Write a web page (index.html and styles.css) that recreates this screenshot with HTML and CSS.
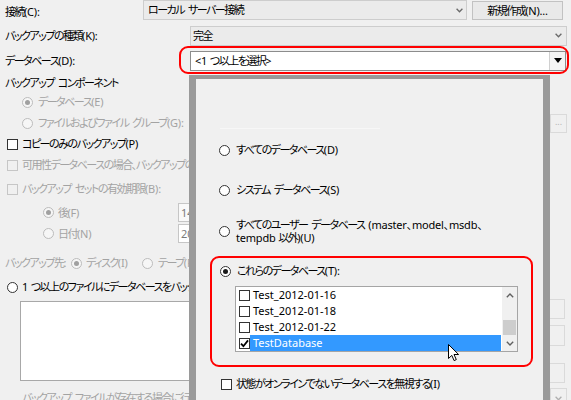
FILE: index.html
```html
<!DOCTYPE html>
<html lang="ja">
<head>
<meta charset="utf-8">
<link rel="stylesheet" href="styles.css">
</head>
<body>
<div class="page">
  <div class="form">
    <div class="row r1">
      <span class="lbl-c">接続<span class="en">(C):</span></span>
      <div class="combo c1"><span class="ctext">ローカル サーバー接続</span><svg class="chev" width="7" height="5" viewBox="0 0 7 5"><polyline points="0.6,0.8 3.5,3.8 6.4,0.8" fill="none" stroke="#6a6a6a" stroke-width="1.3"/></svg></div>
      <button class="btn">新規作成<span class="en">(N)...</span></button>
    </div>
    <div class="row r2">
      <span class="lbl-k">バックアップの種類<span class="en">(K):</span></span>
      <div class="combo c2"><span class="ctext">完全</span><svg class="chev" width="7" height="5" viewBox="0 0 7 5"><polyline points="0.6,0.8 3.5,3.8 6.4,0.8" fill="none" stroke="#6a6a6a" stroke-width="1.3"/></svg></div>
    </div>
    <div class="row r3">
      <span class="lbl-k">データベース<span class="en">(D):</span></span>
      <div class="combo c3"><span class="ctext"><span class="en">&lt;1 </span>つ以上を選択<span class="en">&gt;</span></span><span class="dropbtn"><svg width="8" height="5" viewBox="0 0 8 5"><polygon points="0,0 8,0 4,5" fill="#000"/></svg></span></div>
    </div>
    <div class="row grp">バックアップ コンポーネント</div>
    <div class="row opt-e dis"><span class="radio on"></span><span>データベース<span class="en">(E)</span></span></div>
    <div class="row opt-g dis"><span class="radio"></span><span>ファイルおよびファイル グループ<span class="en">(G):</span></span><span class="dots">...</span></div>
    <div class="row chk-p"><span class="check"></span><span>コピーのみのバックアップ<span class="en">(P)</span></span></div>
    <div class="row chk-a dis"><span class="check"></span><span>可用性データベースの場合、バックアップの優先設定を無視する</span></div>
    <div class="row chk-b dis"><span class="check"></span><span>バックアップ セットの有効期限<span class="en">(B):</span></span></div>
    <div class="row opt-f dis"><span class="radio on"></span><span class="sub-text">後<span class="en">(F)</span></span><span class="field f1">14</span></div>
    <div class="row opt-n dis"><span class="radio"></span><span class="sub-text">日付<span class="en">(N)</span></span><span class="field f2">20</span></div>
    <div class="row dest dis"><span class="dest-lbl">バックアップ先:</span><span class="radio on"></span><span class="dest-opt">ディスク<span class="en">(I)</span></span><span class="radio"></span><span class="dest-opt2">テープ<span class="en">(P)</span></span></div>
    <div class="row opt-files"><span class="radio"></span><span><span class="en">1 </span>つ以上のファイルにデータベースをバックアップする<span class="en">(B):</span></span></div>
    <div class="row box-row">
      <div class="filebox"></div>
      <div class="side-btns"><span class="sbtn b1"></span><span class="sbtn b2"></span><span class="sbtn b3"></span></div>
    </div>
    <div class="row last dis"><span class="last-text">バックアップ ファイルが存在する場合に行う処理</span><span class="mini-combo"><svg width="7" height="5" viewBox="0 0 7 5"><polyline points="0.6,0.8 3.5,3.8 6.4,0.8" fill="none" stroke="#b0b0b0" stroke-width="1.3"/></svg></span></div>
  </div>

  <div class="hl hl-db"></div>

  <div class="panel">
    <div class="ghost"></div>
    <div class="popt p1"><span class="radio"></span><span>すべてのデータベース<span class="en">(D)</span></span></div>
    <div class="popt p2"><span class="radio"></span><span>システム データベース<span class="en">(S)</span></span></div>
    <div class="popt p3"><span class="radio"></span><span class="two">すべてのユーザー データベース <span class="en">(master、model、msdb、</span><br><span class="en">tempdb </span>以外<span class="en">)(U)</span></span></div>
    <div class="pick">
      <div class="popt p4"><span class="radio on"></span><span>これらのデータベース<span class="en">(T):</span></span></div>
      <div class="list">
        <div class="items">
          <div class="item"><span class="check"></span><span class="itext">Test_2012-01-16</span></div>
          <div class="item"><span class="check"></span><span class="itext">Test_2012-01-18</span></div>
          <div class="item"><span class="check"></span><span class="itext">Test_2012-01-22</span></div>
          <div class="item sel"><span class="check"><svg width="9" height="9" viewBox="0 0 9 9"><polyline points="1,4.6 3.4,7.2 8,1.4" fill="none" stroke="#000" stroke-width="1.8"/></svg></span><span class="itext">TestDatabase</span></div>
        </div>
        <div class="sb">
          <span class="sb-btn"><svg width="8" height="5" viewBox="0 0 8 5"><polyline points="0.8,4.2 4,1 7.2,4.2" fill="none" stroke="#606060" stroke-width="1.4"/></svg></span>
          <span class="sb-track"><span class="thumb"></span></span>
          <span class="sb-btn"><svg width="8" height="5" viewBox="0 0 8 5"><polyline points="0.8,0.8 4,4 7.2,0.8" fill="none" stroke="#606060" stroke-width="1.4"/></svg></span>
        </div>
      </div>
    </div>
    <div class="popt p5"><span class="check"></span><span>状態がオンラインでないデータベースを無視する<span class="en">(I)</span></span></div>
  </div>

  <svg class="cursor" width="12" height="18" viewBox="0 0 12 18"><path d="M0.5 0.5 V14.5 L3.8 11.4 L6.1 16.6 L8.3 15.6 L6 10.5 H10.6 Z" fill="#fff" stroke="#000" stroke-width="1" stroke-linejoin="round"/></svg>
</div>
</body>
</html>
```

FILE: styles.css
```css
* { box-sizing: border-box; }
html, body { margin: 0; padding: 0; }
body {
  width: 571px;
  height: 400px;
  overflow: hidden;
  background: #f0f0f0;
  font-family: "Noto Sans", "Noto Sans CJK JP", sans-serif;
  font-size: 11px;
  line-height: 14px;
  color: #000;
  font-feature-settings: "palt";
  letter-spacing: -1.5px;
  word-spacing: 2.5px;
}
.en { letter-spacing: -0.2px; word-spacing: 0; }
.page { position: relative; width: 571px; height: 400px; overflow: hidden; }

.form { display: flex; flex-direction: column; padding: 0 4px 0 5px; }
.row { display: flex; align-items: center; white-space: nowrap; height: 14px; flex-shrink: 0; }
.dis { color: #a3a3a3; }

/* top rows */
.r1 { height: 21px; align-items: flex-start; }
.lbl-c { width: 138px; padding-top: 5px; flex-shrink: 0; }
.lbl-k { width: 185px; flex-shrink: 0; }
.r2 { height: 21px; margin-top: 4px; }
.r3 { height: 21px; margin-top: 4px; }
.combo {
  height: 20px;
  border: 1px solid #cdcdcd;
  background: #ebebeb;
  display: flex;
  align-items: center;
}
.ctext { padding-left: 4px; }
.c1 { width: 324px; flex-shrink: 0; }
.c2 { flex: 1; }
.c2 .ctext { padding-left: 2px; }
.c3 { flex: 1; margin-right: 1px; background: #fff; border-color: #8c8c8c; }
.chev { margin-left: auto; margin-right: 3px; }
.c2 .chev { margin-right: 4px; }
.dropbtn {
  margin-left: auto;
  width: 16px;
  height: 18px;
  border-left: 1px solid #d0d0d0;
  background: #f4f4f4;
  display: flex;
  align-items: center;
  justify-content: center;
}
.btn {
  margin-left: 5px;
  width: 91px;
  height: 19px;
  margin-top: 1px;
  padding: 0;
  border: 1px solid #c2c2c2;
  background: #e9e9e9;
  font: inherit;
  letter-spacing: inherit;
  word-spacing: inherit;
  color: #000;
  line-height: 16px;
  flex-shrink: 0;
}

/* left form */
.grp { margin-top: 5px; }
.opt-e { margin-top: 5px; padding-left: 17px; gap: 5px; }
.opt-g { margin-top: 4px; height: 20px; padding-left: 17px; gap: 5px; }
.dots {
  margin-left: auto;
  width: 17px;
  height: 19px;
  border: 1px solid #dadada;
  color: #b5b5b5;
  font-size: 9px;
  text-align: center;
  line-height: 14px;
  letter-spacing: 0;
}
.chk-p { margin-top: 4px; padding-left: 2px; gap: 4px; }
.chk-a { margin-top: 7px; padding-left: 2px; gap: 4px; }
.chk-b { margin-top: 10px; padding-left: 2px; gap: 4px; }
.opt-f { margin-top: 7px; height: 19px; padding-left: 38px; gap: 4px; }
.opt-n { margin-top: 2px; height: 19px; padding-left: 38px; gap: 4px; }
.sub-text { width: 116px; flex-shrink: 0; }
.field {
  width: 40px;
  height: 19px;
  border: 1px solid #c6c6c6;
  background: #f9f9f9;
  color: #7a7a7a;
  padding-left: 2px;
  line-height: 17px;
  letter-spacing: 0;
  flex-shrink: 0;
}
.f2 { background: #fff; }
.dest { margin-top: 13px; }
.dest-lbl { width: 66px; flex-shrink: 0; }
.dest-opt { width: 56px; margin-left: 4px; flex-shrink: 0; }
.dest-opt2 { margin-left: 5px; }
.opt-files { margin-top: 10px; padding-left: 2px; gap: 4px; }
.box-row { margin-top: 5px; height: 84px; align-items: flex-start; }
.filebox {
  flex: 1;
  margin-left: 15px;
  margin-top: 2px;
  height: 80px;
  background: #fff;
  border: 1px solid #a8a8a8;
}
.side-btns { display: flex; flex-direction: column; width: 16px; margin-left: 10px; margin-right: 2px; }
.sbtn { display: block; border: 1px solid #dadada; }
.b1 { height: 20px; }
.b2 { height: 21px; margin-top: 6px; }
.b3 { height: 20px; margin-top: 17px; }
.last { margin-top: 5px; height: 20px; }
.last-text { padding-left: 17px; }
.mini-combo {
  margin-left: auto;
  width: 17px;
  height: 20px;
  border: 1px solid #dadada;
  display: flex;
  align-items: center;
  justify-content: center;
}

/* controls */
.radio {
  width: 11px;
  height: 11px;
  border: 1px solid #333;
  border-radius: 50%;
  background: #fff;
  flex-shrink: 0;
  display: inline-flex;
  align-items: center;
  justify-content: center;
}
.radio.on::after {
  content: "";
  width: 5px;
  height: 5px;
  border-radius: 50%;
  background: #1a1a1a;
}
.dis .radio { border-color: #bcbcbc; background: #f6f6f6; }
.dis .radio.on::after { background: #a0a0a0; }
.check {
  width: 11px;
  height: 11px;
  border: 1px solid #333;
  background: #fff;
  flex-shrink: 0;
  display: inline-flex;
  align-items: center;
  justify-content: center;
}
.dis .check { border-color: #c6c6c6; background: #f0f0f0; }

/* highlight */
.hl {
  position: absolute;
  border: 2px solid #f00;
  border-radius: 9px;
}
.hl-db { left: 179px; top: 46px; width: 390px; height: 28px; }

/* dropdown panel */
.panel {
  position: absolute;
  left: 189px;
  top: 75px;
  width: 361px;
  height: 340px;
  border-style: solid;
  border-color: #9a9a9a;
  border-width: 4px 7px 0 7px;
  background: #f0f0f0;
  display: flex;
  flex-direction: column;
}
.ghost { margin-top: 49px; margin-left: 24px; width: 160px; height: 1px; background: #f7f7f7; flex-shrink: 0; }
.popt { display: flex; align-items: center; gap: 6px; padding-left: 23px; white-space: nowrap; flex-shrink: 0; min-height: 14px; }
.p1 { margin-top: 14px; }
.p2 { margin-top: 26px; }
.p3 { margin-top: 21px; }
.two { line-height: 13px; }
.pick {
  margin: 12px 10px 0 14px;
  border: 2px solid #f00;
  border-radius: 9px;
  padding: 6px 13px 13px 0;
  flex-shrink: 0;
}
.p4 { padding-left: 8px; }
.p5 { margin-top: 10px; padding-left: 25px; gap: 4px; }

.list {
  margin: 8px 0 0 23px;
  height: 66px;
  border: 1px solid #a5a5a5;
  background: #fff;
  display: flex;
}
.items { flex: 1; display: flex; flex-direction: column; }
.item { display: flex; align-items: center; height: 16px; flex-shrink: 0; }
.item .check { margin-left: 3px; }
.itext {
  flex: 1;
  height: 16px;
  line-height: 16px;
  padding-left: 3px;
  letter-spacing: 0;
}
.sel .itext { background: #3399ff; color: #fff; }
.sb { width: 15px; margin-left: 1px; display: flex; flex-direction: column; background: #f0f0f0; }
.sb-btn { height: 16px; display: flex; align-items: center; justify-content: center; flex-shrink: 0; }
.sb-track { flex: 1; display: flex; flex-direction: column; justify-content: flex-end; align-items: center; }
.thumb { width: 13px; height: 15px; background: #cdcdcd; }

.cursor { position: absolute; left: 448px; top: 344px; }
```
